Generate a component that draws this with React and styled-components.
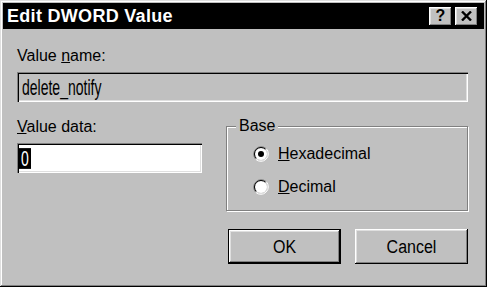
import styled, { createGlobalStyle } from 'styled-components';

const GlobalStyle = createGlobalStyle`
  body {
    margin: 0;
    background: #c0c0c0;
  }
`;

const Window = styled.div`
  width: 487px;
  height: 287px;
  box-sizing: border-box;
  padding: 3px;
  background: #c0c0c0;
  box-shadow: inset -1px -1px #000, inset 1px 1px #dfdfdf,
    inset -2px -2px #808080, inset 2px 2px #fff;
  display: flex;
  flex-direction: column;
  font-family: "Liberation Sans", Arial, sans-serif;
  color: #000;
`;

const TitleBar = styled.div`
  height: 26px;
  background: #000;
  display: flex;
  align-items: center;
  padding: 0 6px 0 4px;
`;

const Title = styled.div`
  flex: 1;
  color: #fff;
  font-weight: bold;
  font-size: 18px;
  line-height: 20px;
  letter-spacing: 0.3px;
`;

const TitleButtons = styled.div`
  display: flex;
  gap: 3px;
`;

const TitleButton = styled.div`
  width: 23px;
  height: 19px;
  background: #c0c0c0;
  box-shadow: inset -1px -1px #000, inset 1px 1px #fff,
    inset -2px -2px #808080, inset 2px 2px #dfdfdf;
  display: flex;
  align-items: center;
  justify-content: center;
  font-weight: bold;
  font-size: 16px;
  line-height: 16px;
`;

const Body = styled.div`
  display: flex;
  flex-direction: column;
  padding: 18px 16px 0 14px;
`;

const Label = styled.div`
  font-size: 16px;
  line-height: 18px;
  height: 18px;
`;

const Field = styled.div`
  margin-top: 7px;
  height: 30px;
  box-sizing: border-box;
  padding: 0 3px 0 5px;
  display: flex;
  align-items: center;
  background: ${(p) => (p.$disabled ? '#c0c0c0' : '#fff')};
  box-shadow: inset 1px 1px #808080, inset 2px 2px #000,
    inset -1px -1px #fff, inset -2px -2px #dfdfdf;
`;

const FieldText = styled.span`
  display: inline-block;
  font-size: 14px;
  line-height: 13px;
  transform: scaleY(1.6);
  background: ${(p) => (p.$selected ? '#000' : 'transparent')};
  color: ${(p) => (p.$selected ? '#fff' : '#000')};
  padding: ${(p) => (p.$selected ? '0 2px' : '0')};
  margin-left: ${(p) => (p.$selected ? '-3px' : '0')};
`;

const Row = styled.div`
  margin-top: 16px;
  display: grid;
  grid-template-columns: 185px 242px;
  column-gap: 24px;
`;

const Column = styled.div`
  display: flex;
  flex-direction: column;
`;

const Group = styled.div`
  position: relative;
  margin-top: 8px;
  height: 85px;
  box-sizing: border-box;
  border: 1px solid #808080;
  box-shadow: inset 1px 1px #fff, 1px 1px #fff;
  padding: 18px 0 0 26px;
  display: flex;
  flex-direction: column;
  gap: 15px;
`;

const Legend = styled.div`
  position: absolute;
  top: -10px;
  left: 9px;
  padding: 0 3px;
  background: #c0c0c0;
  font-size: 16px;
  line-height: 18px;
`;

const Radio = styled.div`
  display: flex;
  align-items: center;
  gap: 9px;
  height: 18px;
  font-size: 16px;
  line-height: 18px;
`;

const Buttons = styled.div`
  margin-top: 18px;
  display: flex;
  justify-content: flex-end;
  gap: 14px;
`;

const Button = styled.div`
  width: 113px;
  height: 35px;
  display: flex;
  align-items: center;
  justify-content: center;
  font-size: 16px;
  background: #c0c0c0;
  box-shadow: ${(p) =>
    p.$default
      ? 'inset 0 0 0 1px #000, inset -2px -2px #000, inset 2px 2px #fff, inset -3px -3px #808080, inset 3px 3px #dfdfdf'
      : 'inset -1px -1px #000, inset 1px 1px #fff, inset -2px -2px #808080, inset 2px 2px #dfdfdf'};
`;

const ButtonText = styled.span`
  display: inline-block;
  transform: scaleY(1.15);
`;

function RadioDot({ checked }) {
  return (
    <svg width="16" height="16" viewBox="0 0 16 16">
      <circle cx="8" cy="8" r="6" fill="#fff" />
      <path d="M2.7 13.3 A7.5 7.5 0 0 1 13.3 2.7" fill="none" stroke="#808080" />
      <path d="M13.3 2.7 A7.5 7.5 0 0 1 2.7 13.3" fill="none" stroke="#fff" />
      <path d="M3.4 12.6 A6.5 6.5 0 0 1 12.6 3.4" fill="none" stroke="#000" />
      <path d="M12.6 3.4 A6.5 6.5 0 0 1 3.4 12.6" fill="none" stroke="#dfdfdf" />
      {checked && <circle cx="8" cy="8" r="3" fill="#000" />}
    </svg>
  );
}

export default function App() {
  return (
    <>
      <GlobalStyle />
      <Window>
        <TitleBar>
          <Title>Edit DWORD Value</Title>
          <TitleButtons>
            <TitleButton>?</TitleButton>
            <TitleButton>
              <svg width="11" height="10" viewBox="0 0 11 10">
                <path d="M1 0.5 L10 9.5 M10 0.5 L1 9.5" stroke="#000" strokeWidth="2.4" />
              </svg>
            </TitleButton>
          </TitleButtons>
        </TitleBar>
        <Body>
          <Label>Value <u>n</u>ame:</Label>
          <Field $disabled>
            <FieldText>delete_notify</FieldText>
          </Field>
          <Row>
            <Column>
              <Label><u>V</u>alue data:</Label>
              <Field>
                <FieldText $selected>0</FieldText>
              </Field>
            </Column>
            <Group>
              <Legend>Base</Legend>
              <Radio>
                <RadioDot checked />
                <span><u>H</u>exadecimal</span>
              </Radio>
              <Radio>
                <RadioDot />
                <span><u>D</u>ecimal</span>
              </Radio>
            </Group>
          </Row>
          <Buttons>
            <Button $default><ButtonText>OK</ButtonText></Button>
            <Button><ButtonText>Cancel</ButtonText></Button>
          </Buttons>
        </Body>
      </Window>
    </>
  );
}
